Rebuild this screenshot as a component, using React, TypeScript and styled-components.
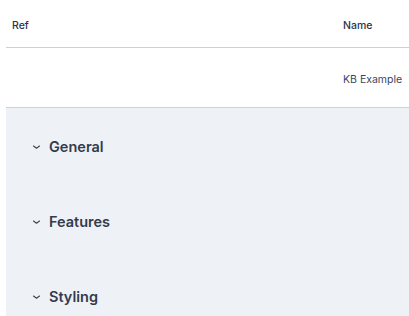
import React, { FC } from 'react'
import styled, { createGlobalStyle } from 'styled-components'

const GlobalStyle = createGlobalStyle`
  html, body {
    margin: 0;
    padding: 0;
    background: #ffffff;
    font-family: Inter, "Noto Sans", sans-serif;
  }
`

const sections = ['General', 'Features', 'Styling']

const Chevron: FC = () => (
  <svg width="9" height="6" viewBox="0 0 9 6">
    <path d="M1.5 2 L4.5 4.2 L7.5 2" fill="none" stroke="#3a4150" strokeWidth="1.1" strokeLinecap="round" strokeLinejoin="round" />
  </svg>
)

const App: FC = () => (
  <>
    <GlobalStyle />
    <Page>
      <Table>
        <HeadCell>Ref</HeadCell>
        <HeadCell>Name</HeadCell>
        <Cell />
        <Cell>KB Example</Cell>
      </Table>
      <Panel>
        {sections.map((s) => (
          <Section key={s}>
            <Chevron />
            <SectionTitle>{s}</SectionTitle>
          </Section>
        ))}
      </Panel>
    </Page>
  </>
)

export default App

const Page = styled.div`
  padding-left: 6px;
  height: 316px;
  overflow: hidden;
`
const Table = styled.div`
  display: grid;
  grid-template-columns: 1fr 72px;
`
const HeadCell = styled.div`
  height: 48px;
  box-sizing: border-box;
  padding: 19px 6px 0 6px;
  font-size: 10.5px;
  font-weight: 500;
  color: #2d3445;
  border-bottom: 1px solid #c9d2de;
`
const Cell = styled.div`
  height: 60px;
  box-sizing: border-box;
  padding: 25px 0 0 6px;
  font-size: 10.5px;
  color: #3b4660;
  border-bottom: 1px solid #c9d2de;
  white-space: nowrap;
`
const Panel = styled.div`
  display: flex;
  flex-direction: column;
  gap: 55px;
  background: #eef2f6;
  padding: 29px 0 40px;
`
const Section = styled.div`
  display: flex;
  align-items: center;
  gap: 8px;
  height: 20px;
  padding-left: 26px;
`
const SectionTitle = styled.div`
  font-size: 14.5px;
  font-weight: 600;
  color: #343b4c;
  line-height: 20px;
`
